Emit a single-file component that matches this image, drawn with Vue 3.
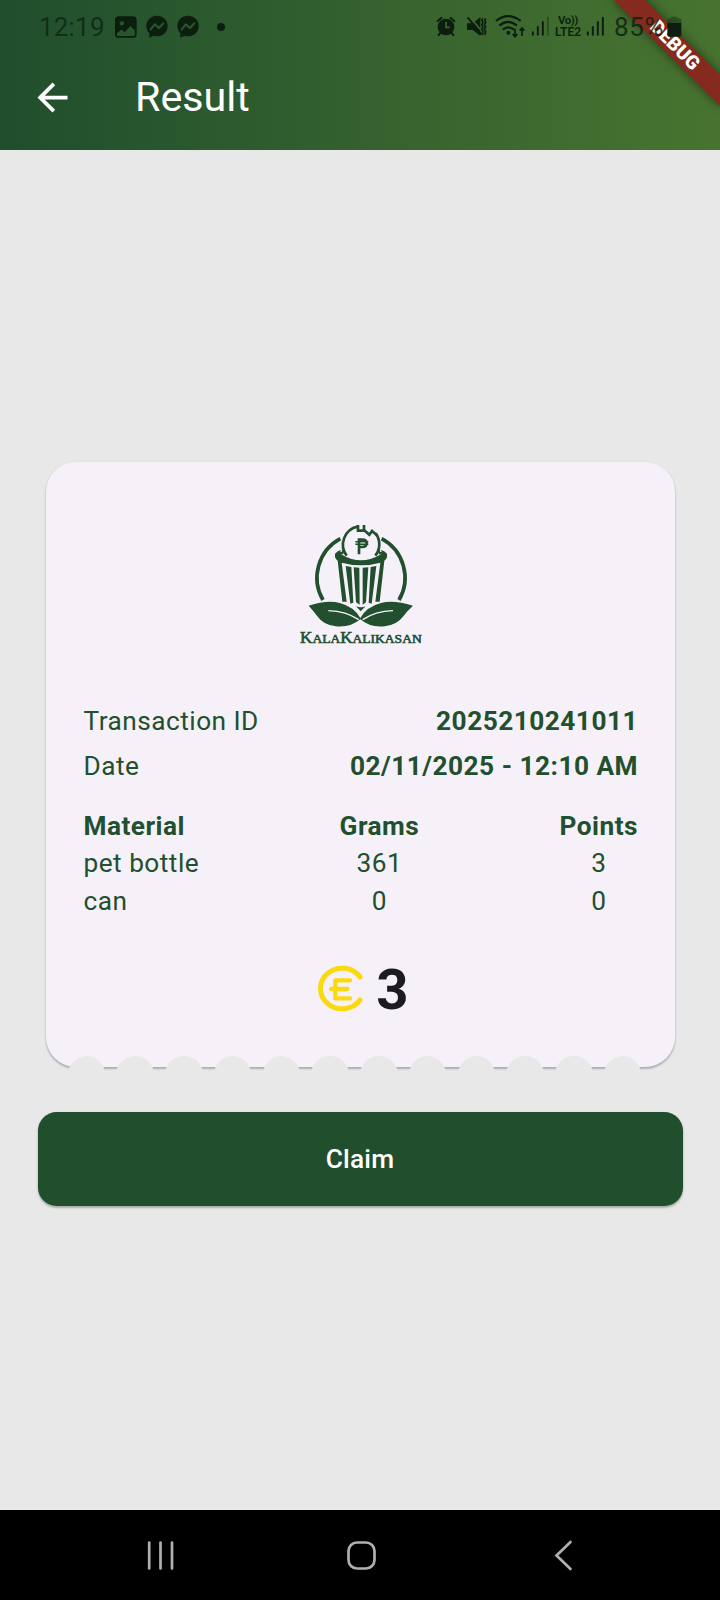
<script setup>
const notches = Array.from({ length: 12 }, (_, i) => i)

const details = [
  { label: 'Transaction ID', value: '2025210241011' },
  { label: 'Date', value: '02/11/2025 - 12:10 AM' },
]

const columns = [
  { title: 'Material', cells: ['pet bottle', 'can'], align: 'start' },
  { title: 'Grams', cells: ['361', '0'], align: 'center' },
  { title: 'Points', cells: ['3', '0'], align: 'center' },
]
</script>

<template>
  <div class="screen">
    <header class="header">
      <div class="banner"><span>DEBUG</span></div>

      <div class="status">
        <span class="time">12:19</span>
        <svg class="photo" width="22" height="22" viewBox="348 47 64 64">
          <rect x="350.500" y="50" width="58" height="58" rx="9" fill="none" stroke="currentColor" stroke-width="5" />
          <path fill="currentColor" fill-rule="evenodd" d="M350 52H409V92L393 76L376 94L367 86L350 100ZM368 62a6.500 6.500 0 1 0 .1 0Z" />
        </svg>
        <svg v-for="n in 2" :key="n" class="chat" width="22" height="23" viewBox="440 46 66 69">
          <path fill="currentColor" d="M473 48c-18 0-32 13-32 31 0 9 3 16 9 22v13l12-6c3 1 7 2 11 2 18 0 32-13 32-31s-14-31-32-31z" />
          <path class="bolt" fill="none" stroke-width="6.500" stroke-linejoin="round" stroke-linecap="round" d="M454 89l12-15 13 11 13-14" />
        </svg>
        <span class="dot"></span>

        <div class="right">
          <svg class="alarm" width="20" height="21" viewBox="48 47 60 63">
            <circle cx="78" cy="80" r="25" fill="currentColor" />
            <path fill="none" stroke="currentColor" stroke-width="6.500" stroke-linecap="round" d="M53 62l11-9M103 62l-11-9M62 97l-6 7M94 97l6 7" />
            <path class="cut" fill="none" stroke-width="5" d="M78 65v16h11" />
          </svg>
          <svg class="mute" width="21" height="21" viewBox="137 46 63 63">
            <path fill="currentColor" d="M140 68h17l23-19v57l-23-18h-17z" />
            <path class="cut" stroke-width="5" d="M147 47l40 48" />
            <path fill="none" stroke="currentColor" stroke-width="6" d="M142 50l41 51" />
            <path fill="none" stroke="currentColor" stroke-width="5" d="M187 53l-3 5 4 7-4 7 4 7-4 7 4 7-3 10M196 53l-3 5 3 7-4 7 4 7-4 7 4 7-3 10" />
          </svg>
          <svg class="wifi" width="31" height="23" viewBox="225 43 93 69">
            <g fill="none" stroke="currentColor" stroke-width="6.500">
              <path d="M228 61q36-29 74 0M238 75q26-23 53 0M248 87q17-14 34 0" />
              <path stroke-width="5" d="M285 84v23M278 100l7 8 7-8M306 106V84M299 90l7-8 7 8" />
            </g>
            <circle cx="265" cy="96" r="6" fill="currentColor" />
          </svg>
          <svg class="bars" width="19" height="20" viewBox="333 48 57 60">
            <g fill="currentColor">
              <rect x="335.500" y="94" width="6" height="13" rx="3" />
              <rect x="350.500" y="78" width="6" height="29" rx="3" />
              <rect x="365.500" y="63" width="6" height="44" rx="3" />
              <rect x="380.500" y="50" width="6" height="57" rx="3" opacity=".35" />
            </g>
          </svg>
          <div class="volte"><span>Vo))</span><span>LTE2</span></div>
          <svg class="bars second" width="19" height="20" viewBox="498 48 57 60">
            <g fill="currentColor">
              <rect x="500.500" y="94" width="6" height="13" rx="3" />
              <rect x="515.500" y="78" width="6" height="29" rx="3" />
              <rect x="530.500" y="63" width="6" height="44" rx="3" />
              <rect x="545.500" y="50" width="6" height="57" rx="3" />
            </g>
          </svg>
          <span class="percent">85%</span>
          <svg class="battery" width="15" height="21" viewBox="740 46 45 63">
            <path fill="currentColor" opacity=".4" d="M753 48h18v5h6q6 0 6 6v9h-42v-9q0-6 6-6h6z" />
            <path fill="currentColor" d="M741 67h42v36q0 5-5 5h-32q-5 0-5-5z" />
          </svg>
        </div>
      </div>

      <div class="appbar">
        <svg width="45" height="45" viewBox="0 0 24 24">
          <path fill="#fff" d="M20 11H7.830l5.590-5.590L12 4l-8 8 8 8 1.410-1.410L7.830 13H20v-2z" />
        </svg>
        <h1>Result</h1>
      </div>
    </header>

    <main class="content">
      <section class="card">
        <svg class="logo" width="160" height="145" viewBox="0 0 480 435">
          <g fill="none" stroke="#224f2d" stroke-width="11">
            <path d="M181 86A133 133 0 0 0 129 270M305 86A133 133 0 0 1 357 270" />
            <path stroke-width="8" d="M200 137A55 55 0 0 1 233 50M287 70A55 55 0 0 1 286 137" />
            <path stroke-width="8" stroke-linejoin="miter" d="M234 45V62H252V45M252 60L268 74L276 63L291 76" />
            <path stroke-width="6" d="M174 127l13 3 4-12M312 127l-13 3-4-12" />
            <path stroke-width="8" d="M237 133V89h9q14 0 14 11T246 111h-9" />
            <path stroke-width="4.500" d="M226 95h39M226 103h39" />
          </g>
          <g fill="#224f2d">
            <path d="M165 131Q172 122 185 119Q174 128 186 134Q243 168 300 134Q312 128 301 119Q314 122 321 131V141Q319 148 313 152L299 275H286L301 158Q243 174 185 158L200 275H187L173 152Q167 148 165 141Z" />
            <path d="M197 168l17 3 6 107-9 3zM221 172l17 1 1 111-11-7zM248 173l17-1-7 105-10 7zM272 171l17-3-14 113-9-3z" />
            <path d="M228 289q15 6 29 0l-15 15z" />
            <path d="M86 287q56-18 93-8 43 11 62 45 19-34 62-45 38-10 96 8-16 14-29 32-19 26-56 30-43 5-73-21-31 26-74 21-37-4-55-30-13-18-26-32z" />
          </g>
          <path fill="none" stroke="#f6f1f9" stroke-width="4" d="M145 302q54 2 91 27M339 302q-54 2-91 27" />
          <text x="60" y="400" textLength="365" lengthAdjust="spacingAndGlyphs" class="wordmark"><tspan class="cap">K</tspan>ALA<tspan class="cap">K</tspan>ALIKASAN</text>
        </svg>

        <div v-for="row in details" :key="row.label" class="detail">
          <span>{{ row.label }}</span>
          <strong>{{ row.value }}</strong>
        </div>

        <div class="table">
          <div v-for="col in columns" :key="col.title" class="column" :class="col.align">
            <strong>{{ col.title }}</strong>
            <span v-for="cell in col.cells" :key="cell">{{ cell }}</span>
          </div>
        </div>

        <div class="total">
          <svg width="47" height="47" viewBox="79 75 141 141">
            <g fill="none" stroke="#fbd90f" stroke-linecap="round" stroke-linejoin="round">
              <path stroke-width="15" d="M208 111A65 61 0 1 0 208 180" />
              <path stroke-width="13" d="M178 121H134V175H178M121 147H170" />
            </g>
          </svg>
          <span>3</span>
        </div>

        <div class="notches"><i v-for="n in notches" :key="n"></i></div>
      </section>

      <button class="claim">Claim</button>
    </main>

    <nav class="nav">
      <svg width="32" height="32" viewBox="0 0 32 32"><path d="M5.200 3.500v26M16.500 3.500v26M28 3.500v26" /></svg>
      <svg width="32" height="32" viewBox="0 0 32 32"><rect x="2.500" y="3.500" width="26" height="26" rx="8.500" /></svg>
      <svg width="32" height="32" viewBox="0 0 32 32"><path d="M23.500 3L9.500 16.500l14 13.500" /></svg>
    </nav>
  </div>
</template>

<style>
body {
  margin: 0;
}
</style>

<style scoped>
.screen {
  width: 720px;
  height: 1600px;
  display: flex;
  flex-direction: column;
  overflow: hidden;
  background: #e8e8e8;
  font-family: Roboto, "Liberation Sans", sans-serif;
}
svg {
  display: block;
  flex: none;
}
.header {
  position: relative;
  height: 150px;
  overflow: hidden;
  background: linear-gradient(90deg, #204e2d, #487430);
}
.banner {
  position: absolute;
  top: 0;
  left: 720px;
  width: 0;
  height: 0;
  transform: rotate(45deg);
}
.banner span {
  position: absolute;
  left: -75px;
  top: 52.500px;
  width: 150px;
  height: 22.500px;
  line-height: 22.500px;
  text-align: center;
  color: #fff;
  font-size: 19.100px;
  font-weight: 900;
  background: #862a1f;
  box-shadow: 0 0 11px rgba(0, 0, 0, 0.5);
}
.status {
  position: relative;
  height: 53px;
  display: flex;
  align-items: center;
  color: #0c1e0f;
}
.time {
  width: 76px;
  padding-left: 39px;
  font-size: 26px;
  letter-spacing: 0.200px;
  color: #122e19;
}
.bolt {
  stroke: #2a552d;
}
.cut {
  stroke: #3c6830;
  fill: none;
}
.photo {
  margin-right: 9px;
}
.chat {
  margin-right: 9px;
}
.dot {
  width: 8px;
  height: 8px;
  margin-left: 9px;
  border-radius: 50%;
  background: currentColor;
}
.right {
  position: absolute;
  left: 436px;
  top: 0;
  height: 52px;
  display: flex;
  align-items: center;
}
.mute {
  margin-left: 9.500px;
}
.wifi {
  margin-left: 8.500px;
}
.bars {
  margin-left: 5px;
}
.volte {
  width: 28px;
  margin-left: 4px;
  padding-top: 1px;
  display: flex;
  flex-direction: column;
  align-items: center;
  font-size: 12px;
  line-height: 11.500px;
  font-weight: 600;
}
.volte span:first-child {
  font-size: 11.500px;
  letter-spacing: -0.500px;
}
.second {
  margin-left: 4px;
}
.percent {
  width: 53px;
  margin-left: 9px;
  padding-top: 1px;
  font-size: 26px;
  letter-spacing: 0.600px;
  opacity: 0.8;
}
.appbar {
  display: flex;
  align-items: center;
  height: 88px;
  padding: 0 30px;
}
.appbar h1 {
  margin: 0 0 0 60px;
  color: #fff;
  font-size: 41.250px;
  font-weight: 400;
  line-height: 52px;
}
.content {
  flex: 1;
  display: flex;
  flex-direction: column;
  align-items: center;
}
.card {
  position: relative;
  box-sizing: border-box;
  width: 629px;
  height: 605px;
  margin: 312px 0 0 1px;
  padding: 48px 37px 0 37.500px;
  border-radius: 30px;
  background: #f6f1f9;
  box-shadow: 0 2px 2px rgba(0, 0, 0, 0.2), 0 1px 3px rgba(0, 0, 0, 0.1);
  color: #224f2d;
  font-size: 26.250px;
  line-height: 37.500px;
  letter-spacing: 0.470px;
}
.logo {
  margin: 0 auto 47.500px 196.500px;
}
.wordmark {
  fill: #224f2d;
  stroke: #224f2d;
  stroke-width: 1.800;
  font-family: "Liberation Serif", serif;
  font-size: 37px;
  letter-spacing: 0;
}
.cap {
  font-size: 47px;
}
.detail {
  display: flex;
  justify-content: space-between;
  margin-bottom: 7.500px;
}
strong {
  font-weight: 700;
}
.table {
  display: flex;
  justify-content: space-between;
  margin-top: 22.500px;
}
.column {
  display: flex;
  flex-direction: column;
}
.center {
  align-items: center;
}
.total {
  display: flex;
  justify-content: center;
  align-items: center;
  gap: 12.500px;
  height: 72px;
  margin-top: 32px;
  padding-left: 4px;
  color: #1c1b20;
  font-size: 56.250px;
  font-weight: 700;
}
.total span {
  padding-top: 5px;
}
.notches {
  position: absolute;
  left: 21.500px;
  top: 594px;
  display: flex;
  gap: 11.250px;
}
.notches i {
  width: 37.500px;
  height: 18.750px;
  border-radius: 18.750px 18.750px 0 0;
  background: #e8e8e8;
}
.claim {
  width: 645px;
  height: 93.750px;
  margin-top: 45px;
  padding: 1px 0 0;
  border: 0;
  border-radius: 18.750px;
  background: #214e2d;
  box-shadow: 0 2px 2px rgba(0, 0, 0, 0.2), 0 1px 3px rgba(0, 0, 0, 0.12);
  color: #fff;
  font: 500 26.250px/37.500px Roboto, sans-serif;
  letter-spacing: 0.190px;
}
.nav {
  display: flex;
  justify-content: space-between;
  align-items: center;
  height: 90px;
  padding: 0 141px 0 144px;
  background: #000;
}
.nav svg {
  fill: none;
  stroke: #b0b0b0;
  stroke-width: 2.700px;
  stroke-linecap: round;
}
</style>
